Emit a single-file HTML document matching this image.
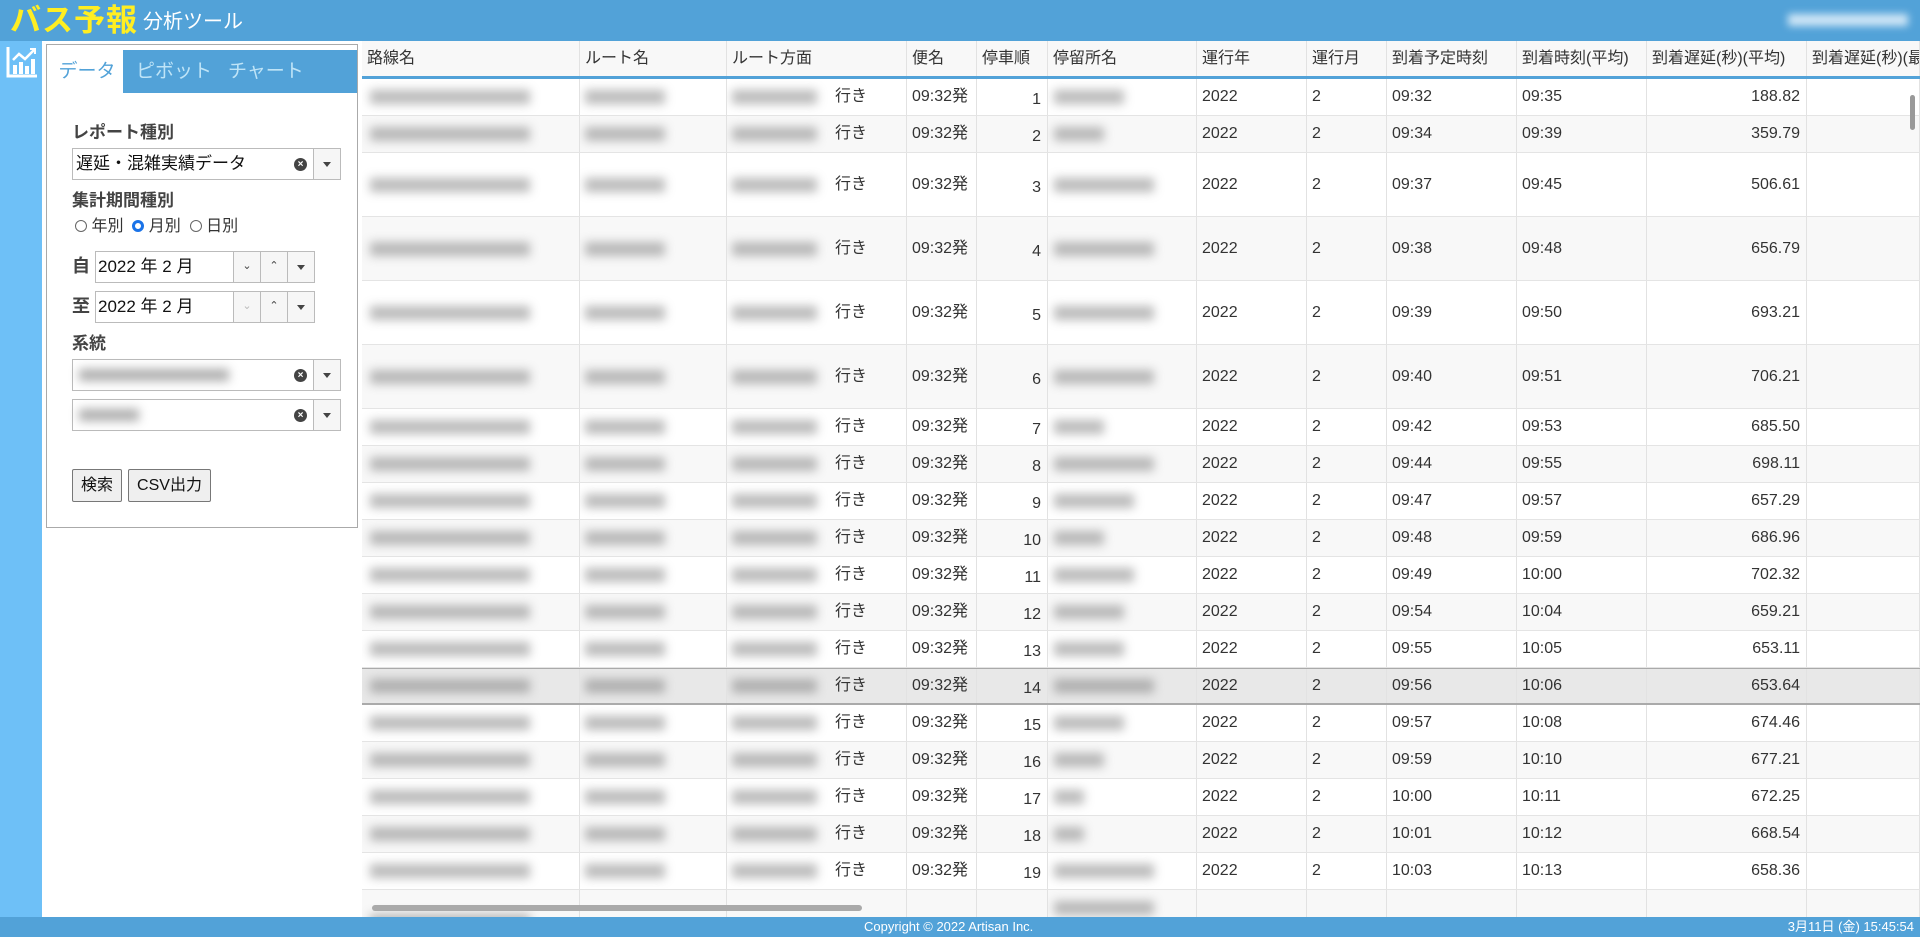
<!DOCTYPE html>
<html><head><meta charset="utf-8">
<style>
*{box-sizing:border-box;margin:0;padding:0}
body{width:1920px;height:937px;overflow:hidden;background:#fff;font-family:"Liberation Sans","Noto Sans CJK JP",sans-serif;color:#333;position:relative}
.hdr{position:absolute;left:0;top:0;width:1920px;height:41px;background:#52a2d8}
.logo{position:absolute;left:10px;top:2px;font-size:31px;font-weight:bold;color:#ffee22;letter-spacing:1px;line-height:38px}
.sub{position:absolute;left:143px;top:9px;font-size:20px;color:#fff;line-height:26px}
.tr{position:absolute;right:12px;top:14px;width:120px;height:12px;background:#cfe6f6;filter:blur(4px)}
.side{position:absolute;left:0;top:41px;width:42px;height:876px;background:#6ec0f7}
.panel{position:absolute;left:46px;top:44px;width:312px;height:484px;border:1px solid #aaa;background:#fff}
.tabs{position:absolute;left:4px;top:5px;width:306px;height:43px;background:#52a2d8}
.tab{position:absolute;top:0;height:43px;line-height:43px;font-size:19px;color:#bfe4f7}
.tab.a{background:#fff;color:#52a2d8;left:0;width:72px;text-align:center}
.lbl{position:absolute;left:25px;font-size:17px;font-weight:bold;color:#444;line-height:22px}
.sel{position:absolute;left:25px;width:269px;height:32px;border:1px solid #bbb;background:#fff;font-size:17px;line-height:30px;padding-left:3px;color:#111}
.sel .x{position:absolute;right:33px;top:9px;width:13px;height:13px;border-radius:50%;background:#444;color:#fff;font-size:10px;line-height:13px;text-align:center;font-weight:bold}
.sel .dd{position:absolute;right:0;top:0;width:27px;height:30px;border-left:1px solid #bbb;background:#f6f6f6}
.tri{position:absolute;left:9px;top:13px;width:0;height:0;border-left:4px solid transparent;border-right:4px solid transparent;border-top:5px solid #444}
.blur{position:absolute;background:#777;filter:blur(5px);opacity:.6}
.num{position:absolute;left:48px;width:220px;height:32px;border:1px solid #bbb;font-size:17px;line-height:30px;padding-left:2px;color:#111}
.nb{position:absolute;top:0;width:27px;height:30px;border-left:1px solid #bbb;background:#f6f6f6;text-align:center;font-size:11px;color:#444;line-height:28px}
.btn{position:absolute;height:33px;border:1px solid #777;border-radius:2px;background:#efefef;font-size:16px;line-height:31px;text-align:center;color:#111}
.grid{position:absolute;left:362px;top:41px;width:1558px;height:876px;overflow:hidden}
.row{display:grid;grid-template-columns:218px 147px 180px 70px 71px 149px 110px 80px 130px 130px 160px 113px;height:37px;border-bottom:1px solid #e4e4e4;font-size:16px;line-height:20px}
.row>div{border-right:1px solid #e2e2e2;padding-left:5px;display:flex;align-items:center;position:relative;white-space:nowrap;overflow:hidden}
.row.h{height:38px;background:#f8f8f8;border-bottom:3px solid #52a2d8;font-size:16px}
.row.t{height:64px}
.row.e{background:#f8f8f8}
.row.s{background:#e8e8e8;border-top:1px solid #aaa;border-bottom:2px solid #aaa}
.r{justify-content:flex-end;padding-right:6px}
.n{justify-content:flex-end;padding-right:6px;padding-top:6px}
.b1,.b2,.b3,.b4{position:absolute;height:14px;background:#777;filter:blur(5px);opacity:.5;top:50%;margin-top:-7px}
.b1{left:8px;width:160px}.b2{left:5px;width:80px}.b3{left:5px;width:85px}.b4{left:6px;width:70px}
.dir{position:absolute;left:108px}
.foot{position:absolute;left:0;top:917px;width:1920px;height:20px;background:#52a2d8;color:#fff;font-size:13px;line-height:20px}
</style></head><body>
<div class="hdr"><div class="logo">バス予報</div><div class="sub">分析ツール</div><div class="tr"></div></div>
<div class="side">
<svg style="position:absolute;left:6px;top:4px" width="32" height="34" viewBox="0 0 32 34"><path d="M2 2V31H31" stroke="#fff" stroke-width="3" fill="none"/><rect x="7" y="20" width="4" height="9" fill="#fff"/><rect x="13" y="17" width="4" height="12" fill="#fff"/><rect x="19" y="21" width="4" height="8" fill="#fff"/><rect x="25" y="14" width="4" height="15" fill="#fff"/><path d="M7 15L13 9L19 14L28 5" stroke="#fff" stroke-width="2.5" fill="none"/><path d="M24 4H29V9" stroke="#fff" stroke-width="2" fill="none"/></svg>
</div>
<div class="panel">
<div class="tabs"><div class="tab a">データ</div><div class="tab" style="left:85px">ピボット</div><div class="tab" style="left:177px">チャート</div></div>
<div class="lbl" style="top:77px">レポート種別</div>
<div class="sel" style="top:103px">遅延・混雑実績データ<span class="x">×</span><span class="dd"><span class="tri"></span></span></div>
<div class="lbl" style="top:145px">集計期間種別</div>
<div style="position:absolute;left:28px;top:172px;font-size:16px;color:#333;line-height:20px"><span style="display:inline-block;width:12px;height:12px;border:1px solid #666;border-radius:50%;vertical-align:-1px"></span> 年別 &nbsp;<span style="display:inline-block;width:12px;height:12px;border:3px solid #1a73e8;border-radius:50%;vertical-align:-1px"></span> 月別 &nbsp;<span style="display:inline-block;width:12px;height:12px;border:1px solid #666;border-radius:50%;vertical-align:-1px"></span> 日別</div>
<div class="lbl" style="top:210px;font-size:18px">自</div>
<div class="num" style="top:206px">2022 年 2 月<span class="nb" style="left:137px">⌄</span><span class="nb" style="left:164px">⌃</span><span class="nb" style="left:191px"><span class="tri"></span></span></div>
<div class="lbl" style="top:250px;font-size:18px">至</div>
<div class="num" style="top:246px">2022 年 2 月<span class="nb" style="left:137px;color:#bbb">⌄</span><span class="nb" style="left:164px">⌃</span><span class="nb" style="left:191px"><span class="tri"></span></span></div>
<div class="lbl" style="top:288px">系統</div>
<div class="sel" style="top:314px"><span class="blur" style="left:6px;top:9px;width:150px;height:12px"></span><span class="x">×</span><span class="dd"><span class="tri"></span></span></div>
<div class="sel" style="top:354px"><span class="blur" style="left:6px;top:9px;width:60px;height:12px"></span><span class="x">×</span><span class="dd"><span class="tri"></span></span></div>
<div class="btn" style="left:25px;width:50px;top:424px">検索</div>
<div class="btn" style="left:81px;width:83px;top:424px">CSV出力</div>
</div>
<div class="grid">
<div class="row h"><div>路線名</div><div>ルート名</div><div>ルート方面</div><div>便名</div><div>停車順</div><div>停留所名</div><div>運行年</div><div>運行月</div><div>到着予定時刻</div><div>到着時刻(平均)</div><div>到着遅延(秒)(平均)</div><div>到着遅延(秒)(最</div></div>
<div class="row"><div><i class="b1"></i></div><div><i class="b2"></i></div><div><i class="b3"></i><span class="dir">行き</span></div><div>09:32発</div><div class="n">1</div><div><i class="b4"></i></div><div>2022</div><div>2</div><div>09:32</div><div>09:35</div><div class="r">188.82</div><div></div></div>
<div class="row e"><div><i class="b1"></i></div><div><i class="b2"></i></div><div><i class="b3"></i><span class="dir">行き</span></div><div>09:32発</div><div class="n">2</div><div><i class="b4" style="width:50px"></i></div><div>2022</div><div>2</div><div>09:34</div><div>09:39</div><div class="r">359.79</div><div></div></div>
<div class="row t"><div><i class="b1"></i></div><div><i class="b2"></i></div><div><i class="b3"></i><span class="dir">行き</span></div><div>09:32発</div><div class="n">3</div><div><i class="b4" style="width:100px"></i></div><div>2022</div><div>2</div><div>09:37</div><div>09:45</div><div class="r">506.61</div><div></div></div>
<div class="row t e"><div><i class="b1"></i></div><div><i class="b2"></i></div><div><i class="b3"></i><span class="dir">行き</span></div><div>09:32発</div><div class="n">4</div><div><i class="b4" style="width:100px"></i></div><div>2022</div><div>2</div><div>09:38</div><div>09:48</div><div class="r">656.79</div><div></div></div>
<div class="row t"><div><i class="b1"></i></div><div><i class="b2"></i></div><div><i class="b3"></i><span class="dir">行き</span></div><div>09:32発</div><div class="n">5</div><div><i class="b4" style="width:100px"></i></div><div>2022</div><div>2</div><div>09:39</div><div>09:50</div><div class="r">693.21</div><div></div></div>
<div class="row t e"><div><i class="b1"></i></div><div><i class="b2"></i></div><div><i class="b3"></i><span class="dir">行き</span></div><div>09:32発</div><div class="n">6</div><div><i class="b4" style="width:100px"></i></div><div>2022</div><div>2</div><div>09:40</div><div>09:51</div><div class="r">706.21</div><div></div></div>
<div class="row"><div><i class="b1"></i></div><div><i class="b2"></i></div><div><i class="b3"></i><span class="dir">行き</span></div><div>09:32発</div><div class="n">7</div><div><i class="b4" style="width:50px"></i></div><div>2022</div><div>2</div><div>09:42</div><div>09:53</div><div class="r">685.50</div><div></div></div>
<div class="row e"><div><i class="b1"></i></div><div><i class="b2"></i></div><div><i class="b3"></i><span class="dir">行き</span></div><div>09:32発</div><div class="n">8</div><div><i class="b4" style="width:100px"></i></div><div>2022</div><div>2</div><div>09:44</div><div>09:55</div><div class="r">698.11</div><div></div></div>
<div class="row"><div><i class="b1"></i></div><div><i class="b2"></i></div><div><i class="b3"></i><span class="dir">行き</span></div><div>09:32発</div><div class="n">9</div><div><i class="b4" style="width:80px"></i></div><div>2022</div><div>2</div><div>09:47</div><div>09:57</div><div class="r">657.29</div><div></div></div>
<div class="row e"><div><i class="b1"></i></div><div><i class="b2"></i></div><div><i class="b3"></i><span class="dir">行き</span></div><div>09:32発</div><div class="n">10</div><div><i class="b4" style="width:50px"></i></div><div>2022</div><div>2</div><div>09:48</div><div>09:59</div><div class="r">686.96</div><div></div></div>
<div class="row"><div><i class="b1"></i></div><div><i class="b2"></i></div><div><i class="b3"></i><span class="dir">行き</span></div><div>09:32発</div><div class="n">11</div><div><i class="b4" style="width:80px"></i></div><div>2022</div><div>2</div><div>09:49</div><div>10:00</div><div class="r">702.32</div><div></div></div>
<div class="row e"><div><i class="b1"></i></div><div><i class="b2"></i></div><div><i class="b3"></i><span class="dir">行き</span></div><div>09:32発</div><div class="n">12</div><div><i class="b4" style="width:70px"></i></div><div>2022</div><div>2</div><div>09:54</div><div>10:04</div><div class="r">659.21</div><div></div></div>
<div class="row"><div><i class="b1"></i></div><div><i class="b2"></i></div><div><i class="b3"></i><span class="dir">行き</span></div><div>09:32発</div><div class="n">13</div><div><i class="b4" style="width:70px"></i></div><div>2022</div><div>2</div><div>09:55</div><div>10:05</div><div class="r">653.11</div><div></div></div>
<div class="row s"><div><i class="b1"></i></div><div><i class="b2"></i></div><div><i class="b3"></i><span class="dir">行き</span></div><div>09:32発</div><div class="n">14</div><div><i class="b4" style="width:100px"></i></div><div>2022</div><div>2</div><div>09:56</div><div>10:06</div><div class="r">653.64</div><div></div></div>
<div class="row"><div><i class="b1"></i></div><div><i class="b2"></i></div><div><i class="b3"></i><span class="dir">行き</span></div><div>09:32発</div><div class="n">15</div><div><i class="b4" style="width:70px"></i></div><div>2022</div><div>2</div><div>09:57</div><div>10:08</div><div class="r">674.46</div><div></div></div>
<div class="row e"><div><i class="b1"></i></div><div><i class="b2"></i></div><div><i class="b3"></i><span class="dir">行き</span></div><div>09:32発</div><div class="n">16</div><div><i class="b4" style="width:50px"></i></div><div>2022</div><div>2</div><div>09:59</div><div>10:10</div><div class="r">677.21</div><div></div></div>
<div class="row"><div><i class="b1"></i></div><div><i class="b2"></i></div><div><i class="b3"></i><span class="dir">行き</span></div><div>09:32発</div><div class="n">17</div><div><i class="b4" style="width:30px"></i></div><div>2022</div><div>2</div><div>10:00</div><div>10:11</div><div class="r">672.25</div><div></div></div>
<div class="row e"><div><i class="b1"></i></div><div><i class="b2"></i></div><div><i class="b3"></i><span class="dir">行き</span></div><div>09:32発</div><div class="n">18</div><div><i class="b4" style="width:30px"></i></div><div>2022</div><div>2</div><div>10:01</div><div>10:12</div><div class="r">668.54</div><div></div></div>
<div class="row"><div><i class="b1"></i></div><div><i class="b2"></i></div><div><i class="b3"></i><span class="dir">行き</span></div><div>09:32発</div><div class="n">19</div><div><i class="b4" style="width:100px"></i></div><div>2022</div><div>2</div><div>10:03</div><div>10:13</div><div class="r">658.36</div><div></div></div>
<div class="row e"><div><i class="b1" style="margin-top:6px"></i></div><div></div><div></div><div></div><div></div><div><i class="b4" style="width:100px"></i></div><div></div><div></div><div></div><div></div><div></div><div></div></div>
</div>
<div style="position:absolute;left:372px;top:905px;width:490px;height:6px;background:#aaa;border-radius:3px"></div>
<div style="position:absolute;left:1910px;top:95px;width:5px;height:35px;background:#999;border-radius:3px"></div>
<div class="foot"><span style="position:absolute;left:864px;top:0">Copyright © 2022 Artisan Inc.</span><span style="position:absolute;right:6px;top:0">3月11日 (金) 15:45:54</span></div>
</body></html>
